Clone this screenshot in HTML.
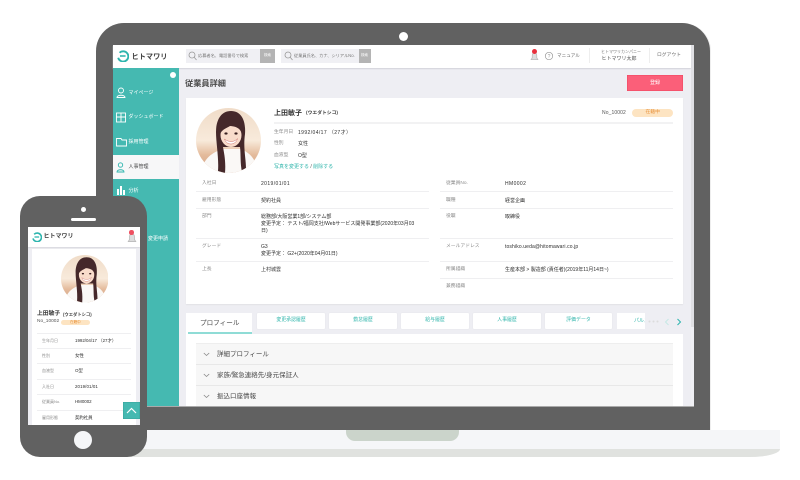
<!DOCTYPE html>
<html lang="ja">
<head>
<meta charset="utf-8">
<title>ヒトマワリ</title>
<style>
html,body{margin:0;padding:0;background:#fff;}
body{width:800px;height:480px;overflow:hidden;position:relative;font-family:"Liberation Sans","Noto Sans CJK JP",sans-serif;}
div,span,svg{position:absolute;}
.t{white-space:nowrap;line-height:1;color:#555;margin-top:1px;}
.blur{filter:blur(.35px);}
.t.l{font-size:4.800px;color:#8c8c8c;margin-top:1.700px;}
.t.v{font-size:5px;color:#2e2e2e;margin-top:1.700px;}
.d{letter-spacing:.4px;}
.t.pl{font-size:4px;color:#8c8c8c;margin-top:1.500px;}
.t.pv{font-size:4.400px;color:#2e2e2e;margin-top:1.500px;}
.hr{height:1px;background:#efeff1;}
.tab{top:313px;height:16px;background:#fff;border-radius:1px;box-shadow:0 0 1px #ddd;}
.tab span{left:0;right:0;top:6px;text-align:center;font-size:4.900px;line-height:1;color:#2fb5ab;white-space:nowrap;}
.t.side{font-size:5px;color:#fff;}
.t.acc{font-size:6.500px;color:#4a4a4a;margin-top:2px;}
</style>
</head>
<body>
<svg width="0" height="0" style="left:0;top:0">
  <defs>
    <linearGradient id="bg" x1="0" y1="0" x2="0" y2="1">
      <stop offset="0" stop-color="#f0dcc8"/>
      <stop offset=".5" stop-color="#f8eadb"/>
      <stop offset=".72" stop-color="#e4bb9c"/>
      <stop offset="1" stop-color="#d2a285"/>
    </linearGradient>
    <clipPath id="cp"><circle cx="32.500" cy="32.500" r="32.500"/></clipPath>
    <symbol id="photo" viewBox="0 0 65 65">
      <g clip-path="url(#cp)">
        <rect width="65" height="65" fill="url(#bg)"/>
        <path d="M5 65C7 50 17 44 27 41L44 41C53 44 60 50 62 65Z" fill="#faf8f6"/>
        <path d="M35 3C25 3 20 12 20 24C20 35 23 50 22 63L29 65C30 53 28 45 27 39L44 39C45 47 44 55 46 64L50 61C50 50 47 40 49 26C50 12 45 3 35 3Z" fill="#45282a"/>
        <ellipse cx="35" cy="27" rx="10.500" ry="12" fill="#f9dccb"/>
        <path d="M24.500 25C24 15 30 11 36 11C42 11 46 16 45.500 25C44 20 40 18.500 34 18C31 20 27 21 24.500 25Z" fill="#45282a"/>
        <path d="M28.500 31C33 34.500 38 34.500 41.500 30.500C40 37.500 30.500 38 28.500 31Z" fill="#fff" stroke="#c9706a" stroke-width=".5"/>
        <ellipse cx="30" cy="25.500" rx="1.600" ry="1.100" fill="#3a2020"/>
        <ellipse cx="40" cy="25.500" rx="1.600" ry="1.100" fill="#3a2020"/>
      </g>
    </symbol>
    <symbol id="logo" viewBox="0 0 14 14">
      <path d="M3 3.200A6 6 0 1 1 1.400 9" fill="none" stroke="#2db5ae" stroke-width="2.200"/>
      <path d="M3.500 7H10" fill="none" stroke="#2db5ae" stroke-width="1.800"/>
    </symbol>
    <symbol id="bell" viewBox="0 0 12 14">
      <path d="M3 10V7C3 4.500 4.300 3.500 6 3.500S9 4.500 9 7V10L10.500 12.500H1.500Z" fill="#ddd" stroke="#bbb" stroke-width="1"/>
    </symbol>
  </defs>
</svg>

<!-- laptop base -->
<div style="left:26px;top:430px;width:754px;height:27px;background:#f5f6f8;border-radius:0 0 30px 30px/0 0 8px 8px;overflow:hidden;">
  <div style="left:0;top:19px;width:754px;height:8px;background:#e0e2df;"></div>
  <div style="left:320px;top:0;width:113px;height:11px;background:#cbd4cb;border-radius:0 0 9px 9px;"></div>
</div>

<!-- laptop bezel -->
<div style="left:96px;top:23px;width:614px;height:407px;background:#616161;border-radius:28px 28px 0 0;box-shadow:1px 0 0 #eee;"></div>
<div style="left:399px;top:32px;width:9px;height:9px;border-radius:50%;background:#fff;"></div>

<!-- laptop screen -->
<div class="blur" style="left:113px;top:45px;width:581px;height:361px;background:#eeeef3;">
  <div style="left:578px;top:0;width:3px;height:361px;background:#f0f0f4;"></div>
  <div style="left:578px;top:0;width:3px;height:282px;background:#e0e0e4;"></div>
</div>

<div class="blur" style="left:0;top:0;width:800px;height:480px;">
  <div style="left:113px;top:45px;width:578px;height:23px;background:#fff;box-shadow:0 1px 1px #d4d4da;"></div>
  <svg style="left:116.500px;top:50px" width="12" height="12"><use href="#logo" width="12" height="12"/></svg>
  <span class="t" style="left:131.500px;top:51.500px;font-size:7.200px;font-weight:bold;color:#444;">ヒトマワリ</span>

  <div style="left:186px;top:49px;width:89px;height:14px;background:#f0f0f4;"></div>
  <div style="left:260px;top:49px;width:15px;height:14px;background:#b4b4b4;"></div>
  <span class="t" style="left:264px;top:53px;font-size:3.500px;color:#fff;">検索</span>
  <svg style="left:188px;top:51px" width="9" height="10"><circle cx="4" cy="4" r="3" fill="none" stroke="#999" stroke-width=".8"/><path d="M6 6L8.500 9" stroke="#999" stroke-width=".8"/></svg>
  <span class="t" style="left:198px;top:53px;font-size:4.200px;color:#777;">応募者名、電話番号で検索</span>

  <div style="left:281px;top:49px;width:90px;height:14px;background:#f0f0f4;"></div>
  <div style="left:359px;top:49px;width:12px;height:14px;background:#b4b4b4;"></div>
  <span class="t" style="left:361px;top:53px;font-size:3.500px;color:#fff;">検索</span>
  <svg style="left:284px;top:51px" width="9" height="10"><circle cx="4" cy="4" r="3" fill="none" stroke="#999" stroke-width=".8"/><path d="M6 6L8.500 9" stroke="#999" stroke-width=".8"/></svg>
  <span class="t" style="left:294px;top:53px;font-size:4.200px;color:#777;">従業員氏名、カナ、シリアルNo.</span>

  <svg style="left:529.500px;top:50px" width="9" height="11"><use href="#bell" width="9" height="11"/></svg>
  <div style="left:531.500px;top:48.500px;width:5px;height:5px;border-radius:50%;background:#e8303c;"></div>
  <svg style="left:544px;top:51px" width="10" height="10"><circle cx="5" cy="5" r="3.700" fill="none" stroke="#999" stroke-width=".7"/><text x="5" y="7" font-size="5" text-anchor="middle" fill="#999" font-family="Liberation Sans">?</text></svg>
  <span class="t" style="left:557px;top:53px;font-size:4.600px;color:#666;">マニュアル</span>
  <div style="left:589px;top:48px;width:1px;height:15px;background:#eee;"></div>
  <span class="t" style="left:601px;top:49px;font-size:4px;color:#777;">ヒトマワリカンパニー</span>
  <span class="t" style="left:601.500px;top:55.500px;font-size:5px;color:#555;">ヒトマワリ太郎</span>
  <div style="left:649px;top:48px;width:1px;height:15px;background:#eee;"></div>
  <span class="t" style="left:657px;top:52.500px;font-size:4.800px;color:#666;">ログアウト</span>

  <!-- sidebar -->
  <div style="left:113px;top:68px;width:66px;height:338px;background:#45b9b1;"></div>
  <div style="left:113px;top:155px;width:66px;height:24px;background:#f7f7f8;"></div>
  <div style="left:169.500px;top:72px;width:6px;height:6px;border-radius:50%;background:#fff;"></div>

  <svg style="left:116px;top:87px" width="10" height="12" fill="none" stroke="#fff" stroke-width=".9"><circle cx="5" cy="3.500" r="2.500"/><path d="M1 10.500C1 7.500 9 7.500 9 10.500Z"/></svg>
  <span class="t side" style="left:128.500px;top:89.500px;">マイページ</span>
  <svg style="left:116px;top:112px" width="10" height="11" fill="none" stroke="#fff" stroke-width=".9"><rect x=".5" y="1" width="9" height="9"/><path d="M5 1V10M0 5H10"/></svg>
  <span class="t side" style="left:128.500px;top:114px;">ダッシュボード</span>
  <svg style="left:116px;top:137px" width="11" height="10" fill="none" stroke="#fff" stroke-width=".9"><path d="M.5 1.500H5L6 3H10.500V9H.5Z"/></svg>
  <span class="t side" style="left:128.500px;top:139px;">採用管理</span>
  <svg style="left:116px;top:162px" width="10" height="11" fill="none" stroke="#2db5ae" stroke-width=".9"><circle cx="4.500" cy="3" r="2.200"/><path d="M1 10C1 7 8 7 8 10Z"/></svg>
  <span class="t side" style="left:128.500px;top:163.500px;color:#444;">人事管理</span>
  <svg style="left:116px;top:185px" width="10" height="10" fill="#fff"><rect x="1" y="4" width="2" height="6"/><rect x="4" y="1" width="2" height="9"/><rect x="7" y="5" width="2" height="5"/></svg>
  <span class="t side" style="left:128.500px;top:187.500px;">分析</span>
  <span class="t side" style="left:148px;top:236px;">変更申請</span>

  <!-- content -->
  <span class="t" style="left:185px;top:78.500px;font-size:8.200px;font-weight:bold;color:#4a4a4a;">従業員詳細</span>
  <div style="left:627px;top:75px;width:56px;height:16px;background:#fb5f79;box-shadow:inset 0 0 0 .5px #ef4560;"></div>
  <span class="t" style="left:650px;top:79.500px;font-size:5px;color:#fff;">登録</span>

  <div style="left:186px;top:98px;width:497px;height:206px;background:#fff;box-shadow:0 1px 1px #e2e2e6;"></div>
  <svg style="left:196px;top:107.500px" width="65" height="65"><use href="#photo" width="65" height="65"/></svg>

  <span class="t" style="left:274px;top:108.500px;font-size:7px;font-weight:bold;color:#3a3a3a;">上田敏子</span>
  <span class="t" style="left:306px;top:110.500px;font-size:4.800px;font-weight:bold;color:#444;">(ウエダトシコ)</span>
  <div style="left:274px;top:122px;width:399px;height:2px;background:#f2f2f3;"></div>
  <span class="t d" style="left:602px;top:110px;font-size:5px;color:#555;letter-spacing:.1px;">No_10002</span>
  <div style="left:632px;top:109px;width:41px;height:8px;border-radius:4px;background:#fde4c2;"></div>
  <span class="t" style="left:645.500px;top:110px;font-size:4.800px;color:#e8913a;">在籍中</span>

  <span class="t l" style="left:274px;top:129px;">生年月日</span>
  <span class="t v d" style="left:298px;top:129px;">1992/04/17 （27才）</span>
  <span class="t l" style="left:274px;top:140.500px;">性別</span>
  <span class="t v" style="left:298px;top:140.500px;">女性</span>
  <span class="t l" style="left:274px;top:152px;">血液型</span>
  <span class="t v" style="left:298px;top:152px;">O型</span>
  <span class="t" style="left:274px;top:164px;font-size:5px;color:#2fb5ab;">写真を変更する <span style="position:static;color:#555;">/</span> 削除する</span>

  <!-- left table -->
  <span class="t l" style="left:202px;top:180px;">入社日</span>
  <span class="t v d" style="left:261px;top:180px;">2019/01/01</span>
  <div class="hr" style="left:196px;top:191px;width:233px;"></div>
  <span class="t l" style="left:202px;top:197px;">雇用形態</span>
  <span class="t v" style="left:261px;top:197px;">契約社員</span>
  <div class="hr" style="left:196px;top:208px;width:233px;"></div>
  <span class="t l" style="left:202px;top:213px;">部門</span>
  <span class="t v" style="left:261px;top:213px;">総務部/大阪営業1部/システム部</span>
  <span class="t v" style="left:261px;top:220px;">変更予定： テスト/福岡支社/Webサービス開発事業部(2020年03月03</span>
  <span class="t v" style="left:261px;top:227px;">日)</span>
  <div class="hr" style="left:196px;top:238px;width:233px;"></div>
  <span class="t l" style="left:202px;top:243px;">グレード</span>
  <span class="t v" style="left:261px;top:243px;">G3</span>
  <span class="t v" style="left:261px;top:250px;">変更予定： G2+(2020年04月01日)</span>
  <div class="hr" style="left:196px;top:261px;width:233px;"></div>
  <span class="t l" style="left:202px;top:266px;">上長</span>
  <span class="t v" style="left:261px;top:266px;">上村城雲</span>

  <!-- right table -->
  <span class="t l" style="left:446px;top:180px;">従業員No.</span>
  <span class="t v d" style="left:505px;top:180px;">HM0002</span>
  <div class="hr" style="left:440px;top:191px;width:233px;"></div>
  <span class="t l" style="left:446px;top:197px;">職種</span>
  <span class="t v" style="left:505px;top:197px;">経営企画</span>
  <div class="hr" style="left:440px;top:208px;width:233px;"></div>
  <span class="t l" style="left:446px;top:213px;">役職</span>
  <span class="t v" style="left:505px;top:213px;">取締役</span>
  <div class="hr" style="left:440px;top:238px;width:233px;"></div>
  <span class="t l" style="left:446px;top:243px;">メールアドレス</span>
  <span class="t v" style="left:505px;top:243px;letter-spacing:.13px;">toshiko.ueda@hitomawari.co.jp</span>
  <div class="hr" style="left:440px;top:261px;width:233px;"></div>
  <span class="t l" style="left:446px;top:266px;">所属組織</span>
  <span class="t v" style="left:505px;top:266px;">生産本部 &gt; 製造部 (責任者)(2019年11月14日~)</span>
  <div class="hr" style="left:440px;top:278px;width:233px;"></div>
  <span class="t l" style="left:446px;top:283px;">兼務組織</span>

  <!-- tabs -->
  <div style="left:186px;top:334px;width:497px;height:72px;background:#fff;"></div>
  <div style="left:186px;top:313px;width:66px;height:21px;background:#fff;"></div>
  <div style="left:188px;top:332px;width:64px;height:2px;background:#8fdcd6;"></div>
  <span class="t" style="left:200px;top:319.500px;font-size:6.600px;color:#4a4a4a;">プロフィール</span>
  <div class="tab" style="left:257px;width:68px;"><span>変更承認履歴</span></div>
  <div class="tab" style="left:329px;width:68px;"><span>勤怠履歴</span></div>
  <div class="tab" style="left:401px;width:68px;"><span>給与履歴</span></div>
  <div class="tab" style="left:473px;width:68px;"><span>人事履歴</span></div>
  <div class="tab" style="left:545px;width:67px;"><span>評価データ</span></div>
  <div style="left:617px;top:313px;width:28px;height:16px;background:#fff;overflow:hidden;"><span class="t" style="left:17px;top:5px;font-size:5px;color:#2fb5ab;">パルス</span></div>
  <svg style="left:648px;top:319.500px" width="12" height="3" fill="#dcdcdc"><circle cx="1.500" cy="1.500" r="1"/><circle cx="5.500" cy="1.500" r="1"/><circle cx="9.500" cy="1.500" r="1"/></svg>
  <svg style="left:664px;top:318px" width="6" height="8" fill="none" stroke="#c6e8e5" stroke-width="1"><path d="M4.500 1L1.500 4L4.500 7"/></svg>
  <svg style="left:676px;top:318px" width="6" height="8" fill="none" stroke="#2db5ae" stroke-width="1"><path d="M1.500 1L4.500 4L1.500 7"/></svg>

  <!-- accordion -->
  <div style="left:196px;top:343px;width:477px;height:63px;background:#f7f7f7;box-shadow:inset 0 1px 0 #eee;"></div>
  <div style="left:196px;top:364px;width:477px;height:1px;background:#e8e8e8;"></div>
  <div style="left:196px;top:385px;width:477px;height:1px;background:#e8e8e8;"></div>
  <svg style="left:203px;top:352px" width="7" height="5" fill="none" stroke="#888" stroke-width=".8"><path d="M.8 1L3.500 3.500L6.200 1"/></svg>
  <svg style="left:203px;top:373px" width="7" height="5" fill="none" stroke="#888" stroke-width=".8"><path d="M.8 1L3.500 3.500L6.200 1"/></svg>
  <svg style="left:203px;top:394px" width="7" height="5" fill="none" stroke="#888" stroke-width=".8"><path d="M.8 1L3.500 3.500L6.200 1"/></svg>
  <span class="t acc" style="left:217px;top:350px;">詳細プロフィール</span>
  <span class="t acc" style="left:217px;top:371px;">家族/緊急連絡先/身元保証人</span>
  <span class="t acc" style="left:217px;top:391.500px;">振込口座情報</span>
  <div style="left:113px;top:405.500px;width:581px;height:1px;background:#aaa;"></div>
</div>

<!-- phone -->
<div style="left:20px;top:196px;width:127px;height:261px;background:#616161;border-radius:20px;"></div>
<div style="left:81px;top:207px;width:5px;height:5px;border-radius:50%;background:#fff;"></div>
<div style="left:71px;top:218px;width:25px;height:2.500px;border-radius:1.500px;background:#fff;"></div>
<div style="left:74px;top:431px;width:18px;height:18px;border-radius:50%;background:#f5f6f8;"></div>

<div class="blur" style="left:28px;top:227px;width:112px;height:198px;background:#eeeef3;overflow:hidden;">
  <div style="left:0;top:0;width:112px;height:20px;background:#fff;box-shadow:0 1px 1px #d8d8de;"></div>
  <svg style="left:4px;top:5px" width="10" height="10"><use href="#logo" width="10" height="10"/></svg>
  <span class="t" style="left:15.500px;top:5.700px;font-size:6px;font-weight:bold;color:#444;">ヒトマワリ</span>
  <svg style="left:98.500px;top:4px" width="10" height="12"><use href="#bell" width="10" height="12"/></svg>
  <div style="left:101px;top:3px;width:4.500px;height:4.500px;border-radius:50%;background:#ee5060;"></div>

  <div style="left:4px;top:22px;width:104px;height:176px;background:#fff;"></div>
  <svg style="left:32.500px;top:28px" width="47.500" height="47.500"><use href="#photo" width="47.500" height="47.500"/></svg>

  <span class="t" style="left:9px;top:83.500px;font-size:5.800px;font-weight:bold;color:#3a3a3a;">上田敏子</span>
  <span class="t" style="left:35px;top:84.500px;font-size:4.300px;font-weight:bold;color:#444;">(ウエダトシコ)</span>
  <span class="t" style="left:9px;top:92px;font-size:4.800px;color:#555;">No_10002</span>
  <div style="left:33px;top:92.500px;width:29px;height:5.500px;border-radius:3px;background:#fde4c2;"></div>
  <span class="t" style="left:42px;top:92.500px;font-size:3.600px;color:#e8913a;">在籍中</span>

  <div class="hr" style="left:9px;top:106px;width:94px;"></div>
  <span class="t pl" style="left:14px;top:110.500px;">生年月日</span>
  <span class="t pv" style="left:47px;top:110.500px;">1992/04/17 （27才）</span>
  <div class="hr" style="left:9px;top:121px;width:94px;"></div>
  <span class="t pl" style="left:14px;top:125.800px;">性別</span>
  <span class="t pv" style="left:47px;top:125.800px;">女性</span>
  <div class="hr" style="left:9px;top:136px;width:94px;"></div>
  <span class="t pl" style="left:14px;top:140.800px;">血液型</span>
  <span class="t pv" style="left:47px;top:140.800px;">O型</span>
  <div class="hr" style="left:9px;top:152px;width:94px;"></div>
  <span class="t pl" style="left:14px;top:156.800px;">入社日</span>
  <span class="t pv" style="left:47px;top:156.800px;letter-spacing:.1px;">2019/01/01</span>
  <div class="hr" style="left:9px;top:167px;width:94px;"></div>
  <span class="t pl" style="left:14px;top:171.800px;">従業員No.</span>
  <span class="t pv" style="left:47px;top:171.800px;">HM0002</span>
  <div class="hr" style="left:9px;top:183px;width:94px;"></div>
  <span class="t pl" style="left:14px;top:187.800px;">雇用形態</span>
  <span class="t pv" style="left:47px;top:187.800px;">契約社員</span>

  <div style="left:95px;top:175px;width:17px;height:17px;background:#45b9b1;box-shadow:inset 0 0 0 .5px #37a39c;"></div>
  <svg style="left:98px;top:179px" width="11" height="9" fill="none" stroke="#fff" stroke-width="1.200"><path d="M1 7L5.500 2.500L10 7"/></svg>
</div>
</body>
</html>
